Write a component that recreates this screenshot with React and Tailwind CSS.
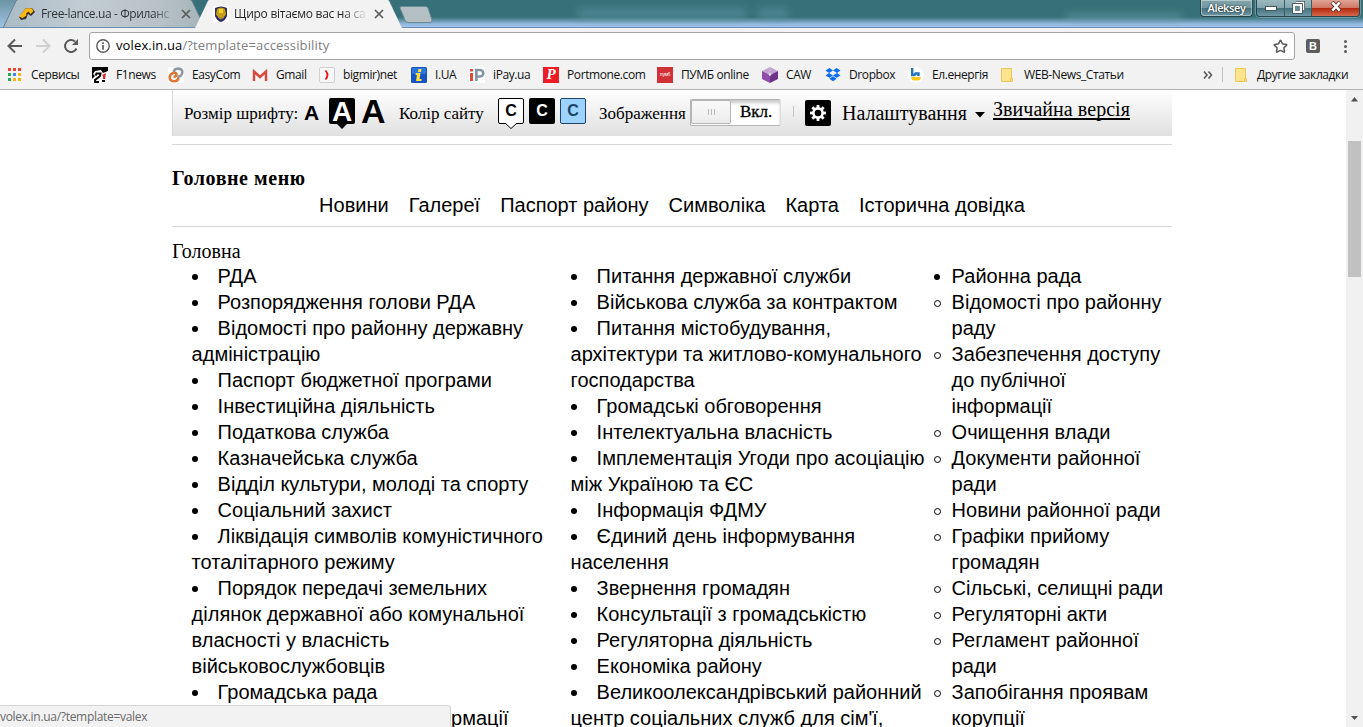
import React from "react";
import { Star } from "lucide-react";

const UI = "font-['Open_Sans','Noto_Sans',sans-serif]";
const SERIF = "font-['Liberation_Serif',serif]";
const SANS = "font-['Liberation_Sans',sans-serif]";

const colOne = [
  ["РДА"],
  ["Розпорядження голови РДА"],
  ["Відомості про районну державну", "адміністрацію"],
  ["Паспорт бюджетної програми"],
  ["Інвестиційна діяльність"],
  ["Податкова служба"],
  ["Казначейська служба"],
  ["Відділ культури, молоді та спорту"],
  ["Соціальний захист"],
  ["Ліквідація символів комуністичного", "тоталітарного режиму"],
  ["Порядок передачі земельних", "ділянок державної або комунальної", "власності у власність", "військовослужбовців"],
  ["Громадська рада"],
  ["Доступ до публічної інформації"],
];
const colTwo = [
  ["Питання державної служби"],
  ["Військова служба за контрактом"],
  ["Питання містобудування,", "архітектури та житлово-комунального", "господарства"],
  ["Громадські обговорення"],
  ["Інтелектуальна власність"],
  ["Імплементація Угоди про асоціацію", "між Україною та ЄС"],
  ["Інформація ФДМУ"],
  ["Єдиний день інформування", "населення"],
  ["Звернення громадян"],
  ["Консультації з громадськістю"],
  ["Регуляторна діяльність"],
  ["Економіка району"],
  ["Великоолександрівський районний", "центр соціальних служб для сім'ї,"],
];
const colThree = [
  ["Районна рада"],
  ["Відомості про районну", "раду"],
  ["Забезпечення доступу", "до публічної", "інформації"],
  ["Очищення влади"],
  ["Документи районної", "ради"],
  ["Новини районної ради"],
  ["Графіки прийому", "громадян"],
  ["Сільські, селищні ради"],
  ["Регуляторні акти"],
  ["Регламент районної", "ради"],
  ["Запобігання проявам", "корупції"],
];

function InsideList({ items, className }) {
  return (
    <ul className={className}>
      {items.map((lines) => (
        <li key={lines[0]}>
          {lines.map((line, i) => (
            <div key={line} className="flex h-[26px] items-center">
              {i === 0 && (
                <span className="flex w-[26px] shrink-0 pt-[2px]">
                  <span className="size-[6px] rounded-full bg-black" />
                </span>
              )}
              <span>{line}</span>
            </div>
          ))}
        </li>
      ))}
    </ul>
  );
}

function OutsideList({ items }) {
  return (
    <ul className="w-[238px]">
      {items.map((lines, n) => (
        <li key={lines[0] + n} className="flex">
          <span className="flex h-[26px] w-[18px] shrink-0 items-center pt-[2px]">
            {n === 0 ? (
              <span className="size-[6px] rounded-full bg-black" />
            ) : (
              <span className="size-[7px] rounded-full border border-black" />
            )}
          </span>
          <div>
            {lines.map((line) => (
              <div key={line} className="h-[26px] leading-[26px]">{line}</div>
            ))}
          </div>
        </li>
      ))}
    </ul>
  );
}

const AppsIcon = () => (
  <svg width="13" height="13" viewBox="0 0 13 13">
    {["#e8432e", "#e8432e", "#e8432e", "#2da562", "#4285f4", "#f9b20b", "#2da562", "#f9b20b", "#f9b20b"].map((c, i) => (
      <rect key={i} x={(i % 3) * 5} y={Math.floor(i / 3) * 5} width="3" height="3" fill={c} />
    ))}
  </svg>
);
const F1Icon = () => (
  <svg width="16" height="16" viewBox="0 0 16 16">
    <rect width="16" height="16" fill="#000" />
    <path d="M0 16V12L3 9L1 7L3 4L9 3L11 6L16 4V16Z" fill="#fff" />
    <path d="M3.500 8.500L4.500 6.500H8.500L8 9L3 13V15H7" fill="none" stroke="#000" strokeWidth="2" />
    <path d="M10 8L14 6L13 12H11V9Z" fill="#e5202b" />
    <path d="M10 13H13V15H10Z" fill="#000" />
  </svg>
);
const EasyIcon = () => (
  <svg width="16" height="16" viewBox="0 0 16 16">
    <rect width="16" height="16" fill="#fff" />
    <path d="M6 5V4C7 1 13.500 .500 14.300 4.500C14.500 8 12 10 9.500 9.500" fill="none" stroke="#8e99a6" strokeWidth="2.600" />
    <path d="M10.500 10.500C10 15.500 1.700 15.500 1.700 10.500C2 6 7 4.500 8.500 7C9 9 6.500 10 5.500 10" fill="none" stroke="#dd7636" strokeWidth="2.600" />
  </svg>
);
const GmailIcon = () => (
  <svg width="16" height="16" viewBox="0 0 16 16">
    <rect x="1" y="3" width="14" height="11" fill="#f4f4f4" />
    <path d="M2 14V4.500L8 10L14 4.500V14" fill="none" stroke="#d8483b" strokeWidth="2.400" />
  </svg>
);
const BigmirIcon = () => (
  <svg width="16" height="16" viewBox="0 0 16 16">
    <rect x=".5" y=".5" width="15" height="15" rx="1.500" fill="#f8f8f8" stroke="#d0d0d0" />
    <path d="M6.500 3.500Q10.500 8 6.500 12.500" fill="none" stroke="#e8161c" strokeWidth="1.800" />
  </svg>
);
const IuaIcon = () => (
  <svg width="16" height="16" viewBox="0 0 16 16">
    <rect width="16" height="16" rx="1.500" fill="#1454c4" />
    <rect x="1" y="1" width="14" height="6" rx="1" fill="#2b76dd" />
    <path d="M5 6H9.500L8.500 12H10.500V14H5L6 8H4.500ZM7.500 2H10.500L10 5H7Z" fill="#ffe23a" />
  </svg>
);
const IpayIcon = () => (
  <svg width="16" height="16" viewBox="0 0 16 16">
    <rect width="16" height="16" fill="#fff" />
    <path d="M1 2H4V4.500H1ZM1 6H4V14H1Z" fill="#e24b35" />
    <path d="M7.300 14V3H11A3 3 0 0 1 11 9.500H8" fill="none" stroke="#8396a4" strokeWidth="2.700" />
  </svg>
);
const PortmoneIcon = () => (
  <span className="flex size-4 items-center justify-center bg-[#ee1c25] font-['Liberation_Serif',serif] text-[15px] leading-none font-bold text-white italic">P</span>
);
const PumbIcon = () => (
  <span className="flex size-4 items-center justify-center bg-[#d22f37] font-['Liberation_Sans',sans-serif] text-[5px] leading-none text-white">пумб</span>
);
const CawIcon = () => (
  <svg width="16" height="16" viewBox="0 0 16 16">
    <path d="M8 0L16 4L8 8L0 4Z" fill="#c3a3d0" />
    <path d="M0 4L8 8V16L0 12Z" fill="#8e4da6" />
    <path d="M16 4L8 8V16L16 12Z" fill="#6d3389" />
    <path d="M8 0V8" fill="none" stroke="#d9c2e2" strokeWidth=".6" />
    <circle cx="8" cy="7.500" r="1.300" fill="#efe3f3" />
  </svg>
);
const DropboxIcon = () => (
  <svg width="16" height="16" viewBox="0 0 16 16" fill="#0b6cf0">
    <path d="M4.500 1L8 3.400L4 5.900L.5 3.400ZM11.500 1L15.500 3.400L12 5.900L8 3.400ZM4 5.900L8 8.400L4.500 10.800L.5 8.400ZM12 5.900L15.500 8.400L11.500 10.800L8 8.400ZM8 9.300L11.700 11.700L8 14.300L4.300 11.700Z" />
  </svg>
);
const EnergyIcon = () => (
  <svg width="16" height="16" viewBox="0 0 16 16">
    <circle cx="8" cy="8" r="8" fill="#fff" />
    <path d="M4.200 1V8H6.500L7.500 6.500H10.500V9" fill="none" stroke="#2273b9" strokeWidth="2.400" />
    <path d="M3 10H13Q12.500 13.500 10 13.500H6Q3.500 13.500 3 10Z" fill="#fcc916" />
  </svg>
);
const FolderIcon = () => (
  <svg width="14" height="16" viewBox="0 0 14 16">
    <path d="M1.500 1.500H11.500V14.500H1.500Z" fill="#ffe48f" stroke="#eec75a" />
    <path d="M10.500 14.500V11.500H12.500V14.500Z" fill="#ffe48f" stroke="#eec75a" />
  </svg>
);

const bookmarks = [
  { label: "Сервисы", Icon: AppsIcon, w: "w-[84px]" },
  { label: "F1news", Icon: F1Icon, w: "w-[76px]" },
  { label: "EasyCom", Icon: EasyIcon, w: "w-[84px]" },
  { label: "Gmail", Icon: GmailIcon, w: "w-[67px]" },
  { label: "bigmir)net", Icon: BigmirIcon, w: "w-[92px]" },
  { label: "I.UA", Icon: IuaIcon, w: "w-[58px]" },
  { label: "iPay.ua", Icon: IpayIcon, w: "w-[74px]" },
  { label: "Portmone.com", Icon: PortmoneIcon, w: "w-[114px]" },
  { label: "ПУМБ online", Icon: PumbIcon, w: "w-[105px]" },
  { label: "CAW", Icon: CawIcon, w: "w-[63px]" },
  { label: "Dropbox", Icon: DropboxIcon, w: "w-[83px]" },
  { label: "Ел.енергія", Icon: EnergyIcon, w: "w-[92px]" },
  { label: "WEB-News_Статьи", Icon: FolderIcon, w: "w-[203px]" },
];

const CloseX = () => (
  <svg width="10" height="10" viewBox="0 0 10 10" className="shrink-0">
    <path d="M1 1L9 9M9 1L1 9" stroke="#5a5a5a" strokeWidth="1.700" />
  </svg>
);

function TabStrip() {
  return (
    <div className={`relative flex h-7 shrink-0 overflow-hidden bg-[linear-gradient(180deg,#377078_0,#377078_17px,#93b9df_24px,#a3c3ec_27px)] ${UI} text-[12px]`}>
      <div className="absolute top-[8px] left-[578px] h-[11px] w-[168px] bg-[#5b93a4] opacity-60 blur-[4px]" />
      <div className="absolute top-[8px] left-[758px] h-[11px] w-[30px] bg-[#5b93a4] opacity-60 blur-[4px]" />
      <div className="absolute top-[14px] left-[1066px] h-[7px] w-[116px] bg-[#6b9fb4] opacity-60 blur-[4px]" />
      <div className="absolute bottom-0 left-[401px] h-px w-[962px] bg-[#6b8fb0]" />
      <svg width="460" height="28" viewBox="0 0 460 28" className="absolute top-0 left-0">
        <defs>
          <linearGradient id="tab" x1="0" x2="1"><stop offset="0" stopColor="#a9bbc6" /><stop offset=".4" stopColor="#c2ccd3" /><stop offset=".75" stopColor="#b9c2c9" /><stop offset="1" stopColor="#a5b5b8" /></linearGradient>
          <linearGradient id="edge" x1="0" x2="0" y1="0" y2="1"><stop offset="0" stopColor="#6a94a3" /><stop offset="1" stopColor="#a3c3e4" /></linearGradient>
        </defs>
        <rect width="20" height="28" fill="url(#edge)" />
        <path d="M3 28L16 1Q17 -.5 19 -.5H189Q191 -.5 192 1L205 28Z" fill="url(#tab)" stroke="#68808e" />
        <path d="M0 27.500H196L208 1Q209 -.5 211 -.5H386Q388 -.5 389 1L401 27.500H460" fill="none" stroke="#6b8fb0" />
        <path d="M195 28L208 1Q209 -.5 211 -.5H386Q388 -.5 389 1L402 28Z" fill="#f2f2f2" />
        <path d="M401 6.500H425Q427 6.500 428 8L432 20Q432.500 22.500 430 22.500H408Q406 22.500 405 20L400 8Q400 6.500 401 6.500Z" fill="#b4c0c3" stroke="#698b91" />
      </svg>
      <div className="relative flex h-7 w-[213px] shrink-0 items-center pl-[18px]">
        <svg width="18" height="14" viewBox="0 0 18 14" className="shrink-0">
          <path d="M1 10L8 1H14L17 5L13 9L10 7L8 12L3 13Z" fill="#3c3428" />
          <path d="M1 9.500L8 1.200H13.500L15.500 4L12.500 7L10.500 4.500L8 6.500L8.500 8.500L4.500 11Z" fill="#fcb913" />
        </svg>
        <span className="ml-[5px] w-[131px] overflow-hidden bg-[linear-gradient(90deg,#2c3439_112px,#2c343900_134px)] bg-clip-text tracking-[-0.38px] whitespace-nowrap text-transparent">Free-lance.ua - Фриланс</span>
        <span className="ml-[9px]"><CloseX /></span>
      </div>
      <div className="relative flex h-7 w-[188px] shrink-0 items-center">
        <svg width="16" height="16" viewBox="0 0 16 16" className="shrink-0">
          <rect width="16" height="16" fill="#fff" />
          <path d="M2 2Q8 -1 14 2V10Q12 15 8 16Q4 15 2 10Z" fill="#2b2a63" />
          <path d="M4 3Q8 0 12 3L13 8Q12 11 8 12Q4 11 3 8Z" fill="#c79d17" />
          <path d="M6 3H10V7H6Z" fill="#f0d12c" />
          <path d="M5 11L8 13L11 11" fill="none" stroke="#d7b026" />
        </svg>
        <span className="ml-[5px] w-[133px] overflow-hidden bg-[linear-gradient(90deg,#222_108px,#22222200_134px)] bg-clip-text tracking-[-0.27px] whitespace-nowrap text-transparent">Щиро вітаємо вас на са</span>
        <span className="ml-[7px]"><CloseX /></span>
      </div>
      <div className="relative ml-auto flex h-[17px] pr-[3px]">
        <div className="flex h-[17px] w-[53px] items-center justify-center rounded-b-[4px] border border-t-0 border-[#26474d] bg-[linear-gradient(180deg,#82a5aa_0,#7397a0_8px,#45727b_8px,#6f98a5_100%)] text-[11px] font-semibold tracking-[-0.4px] text-white shadow-[inset_0_0_0_1px_#ffffff66] [text-shadow:0_0_2px_#000]">Aleksey</div>
        <div className="ml-[3px] flex h-[17px] overflow-hidden rounded-b-[4px] border border-t-0 border-[#26474d] shadow-[0_0_0_1px_#bcd3dc66]">
          <div className="flex w-[28px] items-center justify-center border-r border-[#3a5a62] bg-[linear-gradient(180deg,#9bb8be_0,#85a6ae_8px,#41707a_8px,#6f98a5_100%)]">
            <span className="mt-px h-[5px] w-[12px] border border-[#46545d] bg-white" />
          </div>
          <div className="flex w-[27px] items-center justify-center border-r border-[#3a5a62] bg-[linear-gradient(180deg,#9bb8be_0,#85a6ae_8px,#41707a_8px,#6f98a5_100%)]">
            <svg width="13" height="13" viewBox="0 0 13 13" className="-mt-[2px]">
              <path d="M4 1.500H11.500V9" fill="none" stroke="#3c4a58" strokeWidth="3" />
              <path d="M4 1.500H11.500V9" fill="none" stroke="#fff" strokeWidth="1.500" />
              <rect x="2" y="4" width="7" height="7" fill="none" stroke="#3c4a58" strokeWidth="3.500" />
              <rect x="2" y="4" width="7" height="7" fill="#6b8a98" stroke="#fff" strokeWidth="2" />
            </svg>
          </div>
          <div className="flex w-[47px] items-center justify-center bg-[linear-gradient(180deg,#dfa496_0,#cf7763_8px,#b5260c_8px,#d2694b_100%)]">
            <svg width="12" height="11" viewBox="0 0 12 11" className="-mt-[3px]">
              <path d="M2 1L10 10M10 1L2 10" stroke="#5c2b2b" strokeWidth="4.200" />
              <path d="M2.300 1.300L9.700 9.700M9.700 1.300L2.300 9.700" stroke="#fff" strokeWidth="2.500" />
            </svg>
          </div>
        </div>
      </div>
    </div>
  );
}

function AddressBar() {
  return (
    <div className={`flex h-8 shrink-0 items-start bg-[#f2f2f2] pt-1 ${UI}`}>
      <div className="flex h-[28px] w-[89px] items-center">
        <svg width="89" height="28" viewBox="0 0 89 28" fill="none" strokeWidth="2">
          <path d="M22 14H9M15 7.500L8.500 14L15 20.500" stroke="#5a5a5a" />
          <path d="M36 14H49M43 7.500L49.500 14L43 20.500" stroke="#d0d0d0" />
          <path d="M76.500 16.500A6 6 0 1 1 75 9.500" stroke="#5a5a5a" />
          <path d="M78 7V13H72Z" fill="#5a5a5a" />
        </svg>
      </div>
      <div className="flex h-[28px] w-[1206px] items-center rounded-[3px] border border-[#a5a5a5] bg-white pr-[6px] pl-[6px] text-[13px]">
        <svg width="14" height="14" viewBox="0 0 14 14">
          <circle cx="7" cy="7" r="6.200" fill="none" stroke="#5a5a5a" strokeWidth="1.400" />
          <path d="M7 3.200V5M7 6V10.800" stroke="#5a5a5a" strokeWidth="1.700" />
        </svg>
        <span className="ml-[6px] tracking-[0.13px] whitespace-nowrap text-[#808080]"><span className="text-black">volex.in.ua</span>/?template=accessibility</span>
        <Star className="ml-auto" size={15} strokeWidth={2.400} color="#5a5a5a" strokeLinejoin="miter" />
      </div>
      <div className="mt-[7px] ml-[11px] flex size-[14px] items-center justify-center rounded-[2px] bg-[#5d5d5d] font-['Liberation_Sans',sans-serif] text-[11px] leading-none font-bold text-white">B</div>
      <div className="mt-[8px] ml-[24px] flex flex-col gap-[2px]">
        <span className="size-[3px] rounded-full bg-[#5a5a5a]" />
        <span className="size-[3px] rounded-full bg-[#5a5a5a]" />
        <span className="size-[3px] rounded-full bg-[#5a5a5a]" />
      </div>
    </div>
  );
}

function BookmarkBar() {
  return (
    <div className={`flex h-[30px] shrink-0 items-center border-b border-[#b3b3b3] bg-[#f2f2f2] pl-2 ${UI} text-[12px] tracking-[-0.4px] whitespace-nowrap text-[#111]`}>
      {bookmarks.map(({ label, Icon, w }, i) => (
        <div key={label} className={`flex shrink-0 items-center ${w}`}>
          <span className={i === 0 ? "flex w-[23px] shrink-0" : "flex w-6 shrink-0"}><Icon /></span>
          <span>{label}</span>
        </div>
      ))}
      <svg width="10" height="10" viewBox="0 0 10 10" fill="none" stroke="#5a5a5a" strokeWidth="1.600" className="shrink-0">
        <path d="M1 1.500L4 5L1 8.500M5.500 1.500L8.500 5L5.500 8.500" />
      </svg>
      <span className="ml-[9px] h-[15px] w-px shrink-0 bg-[#c2c2c2]" />
      <span className="ml-[11px] flex w-[23px] shrink-0"><FolderIcon /></span>
      <span>Другие закладки</span>
    </div>
  );
}

const Gear = () => (
  <svg width="18" height="18" viewBox="-9 -9 18 18">
    <circle r="4.600" fill="none" stroke="#fff" strokeWidth="2.600" />
    {[0, 45, 90, 135, 180, 225, 270, 315].map((a) => (
      <rect key={a} x="-1.400" y="-8" width="2.800" height="3" fill="#fff" transform={`rotate(${a})`} />
    ))}
  </svg>
);

function AccessibilityBar() {
  return (
    <div className={`flex h-[46px] items-start border-l border-[#d8d8d8] bg-gradient-to-b from-white to-[#e0e0e0] pl-[11px] whitespace-nowrap ${SERIF} text-[17px] leading-[20px] text-black`}>
      <span className="w-[120px] pt-[14px]">Розмір шрифту:</span>
      <span className={`w-[25px] pt-[13px] ${SANS} text-[21px] font-bold`}>A</span>
      <span className={`relative mt-2 flex h-[26px] w-[26px] items-center justify-center rounded-[2px] bg-black pt-px ${SANS} text-[28px] font-bold text-white`}>
        A
        <svg width="10" height="5" viewBox="0 0 10 5" className="absolute top-[26px] left-[8px]"><path d="M0 0H10L5 5Z" /></svg>
      </span>
      <span className={`ml-[6px] w-[38px] pt-[11px] ${SANS} text-[34px] font-bold`}>A</span>
      <span className="w-[99px] pt-[14px]">Колір сайту</span>
      <span className={`relative mt-2 flex size-[26px] items-center justify-center rounded-[2px] border border-black bg-white ${SANS} text-[16px] font-bold`}>
        C
        <svg width="12" height="6" viewBox="0 0 12 6" className="absolute top-[24px] left-[6px]"><path d="M0 0L6 5.500L12 0" fill="#fff" stroke="#000" /></svg>
      </span>
      <span className={`mt-2 ml-[5px] flex size-[26px] items-center justify-center rounded-[2px] bg-black ${SANS} text-[16px] font-bold text-white`}>C</span>
      <span className={`mt-2 ml-[5px] flex size-[26px] items-center justify-center rounded-[2px] border border-[#1f4468] bg-[#9dd4ff] ${SANS} text-[16px] font-bold text-[#1c4668]`}>C</span>
      <span className="ml-[13px] w-[91px] pt-[14px]">Зображення</span>
      <span className="mt-[9px] flex h-[27px] w-[91px] rounded-[2px] border border-[#b5b5b5] border-r-[#ddd] bg-white shadow-[inset_0_3px_3px_#ccc]">
        <span className="flex h-[24px] w-[40px] items-center justify-center gap-[2px] rounded-[2px] border border-[#b5b5b5] bg-gradient-to-b from-[#fafafa] to-[#ececec]">
          <span className="h-[6px] w-px bg-[#bbb]" />
          <span className="h-[6px] w-px bg-[#bbb]" />
          <span className="h-[6px] w-px bg-[#bbb]" />
        </span>
        <span className="pt-[2px] pl-[9px] [-webkit-text-stroke:0.3px_black]">Вкл.</span>
      </span>
      <span className="mt-[16px] ml-[12px] h-[11px] w-px bg-[#c4c4c4]" />
      <span className="mt-[10px] ml-[11px] flex size-[26px] items-center justify-center rounded-[2px] bg-black"><Gear /></span>
      <span className="ml-[11px] w-[133px] pt-[13px] text-[20px]">Налаштування</span>
      <svg width="10" height="6" viewBox="0 0 10 6" className="mt-[22px]"><path d="M0 0H10L5 5.500Z" /></svg>
      <a className="mt-[11px] ml-[8px] border-b-2 border-black text-[20px] leading-[17px] tracking-[0.05px]">Звичайна версія</a>
    </div>
  );
}

export default function App() {
  return (
    <div className="relative flex h-[727px] w-[1363px] flex-col overflow-hidden bg-white">
      <TabStrip />
      <AddressBar />
      <BookmarkBar />
      <div className="flex h-[637px] justify-between overflow-hidden">
        <main className="ml-[172px] w-[1000px] shrink-0">
          <div className="border-b border-[#d6d6d6] pb-2"><AccessibilityBar /></div>
          <div className="h-[82px] border-b border-[#d6d6d6] pt-[21px]">
            <h2 className={`h-[26px] ${SERIF} text-[20px] leading-[24px] font-bold tracking-[0.55px]`}>Головне меню</h2>
            <nav className={`flex justify-center gap-5 whitespace-nowrap ${SANS} text-[20px] leading-[26px]`}>
              {["Новини", "Галереї", "Паспорт району", "Символіка", "Карта", "Історична довідка"].map((t) => <a key={t}>{t}</a>)}
            </nav>
          </div>
          <div className={`h-[36px] pt-[12px] ${SERIF} text-[20px] leading-[24px]`}>Головна</div>
          <div className={`flex pl-[19.600px] whitespace-nowrap ${SANS} text-[20px]`}>
            <InsideList items={colOne} className="w-[379px] shrink-0" />
            <InsideList items={colTwo} className="w-[363px] shrink-0" />
            <OutsideList items={colThree} />
          </div>
        </main>
        <div className="flex w-[17px] flex-col items-center bg-[#f1f1f1]">
          <svg width="17" height="51" viewBox="0 0 17 51"><path d="M5 11.500L8.500 7L12 11.500Z" fill="#505050" /></svg>
          <div className="h-[136px] w-[13px] bg-[#c1c1c1]" />
          <svg width="17" height="17" viewBox="0 0 17 17" className="mt-auto"><path d="M5 6L8.500 10L12 6Z" fill="#505050" /></svg>
        </div>
      </div>
      <div className={`absolute bottom-0 left-0 h-[22px] w-[451px] rounded-tr-[4px] border-t border-r border-[#d4d4d4] bg-[#f2f2f2] ${UI} text-[12px] leading-[22px] tracking-[-0.3px] text-[#6a6a6a]`}>volex.in.ua/?template=valex</div>
    </div>
  );
}
